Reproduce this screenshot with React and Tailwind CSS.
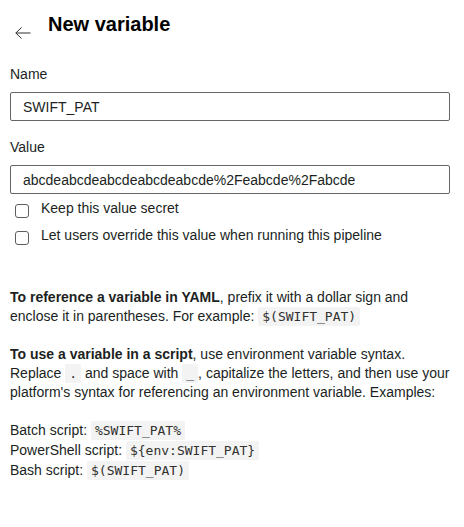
import { useState } from "react";

const NAME = "SWIFT_PAT";

function Code({ children }) {
  return (
    <code className="rounded-[2px] bg-[#f3f3f3] px-[4px] py-[2px] font-['DejaVu_Sans_Mono',monospace] text-[13px] leading-none text-[#323130]">
      {children}
    </code>
  );
}

function Check({ label, checked, onChange }) {
  return (
    <label className="flex h-[20px] cursor-pointer items-start">
      <input
        type="checkbox"
        checked={checked}
        onChange={(e) => onChange(e.target.checked)}
        className="ml-[5px] mt-[6px] h-[14px] w-[14px] shrink-0 appearance-none rounded-[3px] border border-[#605e5c] bg-white checked:bg-[#0078d4]"
      />
      <span className="ml-[12px] leading-[20px]">{label}</span>
    </label>
  );
}

export default function App() {
  const [name, setName] = useState(NAME);
  const [value, setValue] = useState("abcdeabcdeabcdeabcdeabcde%2Feabcde%2Fabcde");
  const [secret, setSecret] = useState(false);
  const [override, setOverride] = useState(false);

  return (
    <div className="min-h-[527px] bg-white pl-[10px] pr-[14px] font-['Liberation_Sans',Arial,sans-serif] text-[14px] text-[#201f1e]">
      {/* header */}
      <div className="flex items-start pt-[10px]">
        <button className="ml-[5px] mt-[15px] text-[#323130]" aria-label="Back">
          <svg width="16" height="16" viewBox="0 0 16 16" fill="none" stroke="currentColor" strokeWidth="1">
            <path d="M15.5 8H0.8M6.5 2.5L0.8 8l5.7 5.5" />
          </svg>
        </button>
        <h1 className="ml-[17px] text-[20px] font-bold leading-[28px] text-[#000]">New variable</h1>
      </div>

      {/* name */}
      <div className="mt-[23px] leading-[20px]">Name</div>
      <input
        value={name}
        onChange={(e) => setName(e.target.value)}
        className="mt-[8px] block h-[29px] w-full rounded-[2px] border border-[#666] px-[12px] text-[14px] outline-none"
      />

      {/* value */}
      <div className="mt-[16px] leading-[20px]">Value</div>
      <input
        value={value}
        onChange={(e) => setValue(e.target.value)}
        className="mt-[8px] block h-[29px] w-full rounded-[2px] border border-[#666] px-[12px] text-[14px] outline-none"
      />

      <div className="mt-[4px] flex flex-col gap-[7px]">
        <Check label="Keep this value secret" checked={secret} onChange={setSecret} />
        <Check label="Let users override this value when running this pipeline" checked={override} onChange={setOverride} />
      </div>

      {/* help text */}
      <p className="mt-[43px] leading-[19px]">
        <b>To reference a variable in YAML</b>, prefix it with a dollar sign and enclose it in parentheses. For example:{" "}
        <Code>$({name})</Code>
      </p>
      <p className="mt-[19px] leading-[19px]">
        <b>To use a variable in a script</b>, use environment variable syntax. Replace <Code>.</Code> and space with{" "}
        <Code>_</Code>, capitalize the letters, and then use your platform's syntax for referencing an environment
        variable. Examples:
      </p>
      <div className="mt-[18px] leading-[20px]">
        <div>
          Batch script: <Code>%{name}%</Code>
        </div>
        <div>
          PowerShell script: <Code>${"{"}env:{name}{"}"}</Code>
        </div>
        <div>
          Bash script: <Code>$({name})</Code>
        </div>
      </div>
    </div>
  );
}
